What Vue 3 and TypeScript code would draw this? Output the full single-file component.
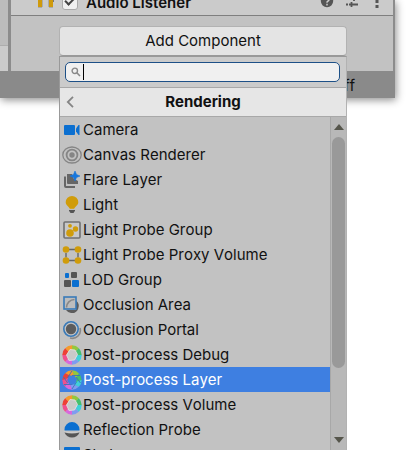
<script setup lang="ts">
import { ref } from 'vue'

interface Item {
  name: string
  icon: string
}

const items: Item[] = [
  { name: 'Camera', icon: 'camera' },
  { name: 'Canvas Renderer', icon: 'canvas' },
  { name: 'Flare Layer', icon: 'flare' },
  { name: 'Light', icon: 'light' },
  { name: 'Light Probe Group', icon: 'probes' },
  { name: 'Light Probe Proxy Volume', icon: 'proxy' },
  { name: 'LOD Group', icon: 'lod' },
  { name: 'Occlusion Area', icon: 'area' },
  { name: 'Occlusion Portal', icon: 'portal' },
  { name: 'Post-process Debug', icon: 'ring' },
  { name: 'Post-process Layer', icon: 'aperture' },
  { name: 'Post-process Volume', icon: 'ring' },
  { name: 'Reflection Probe', icon: 'reflection' },
  { name: 'Skybox', icon: 'skybox' },
]

const selected = ref('Post-process Layer')
const query = ref('')
const enabled = ref(true)

// Colour wheel segments, clockwise from the top
const wheel: string[] = ['#93c83e', '#45c06d', '#3fd0d8', '#7f9cf0', '#d868dc', '#f0508c', '#ee4036', '#f59a2c']

function point(radius: number, degrees: number): string {
  const a = ((degrees - 90) * Math.PI) / 180
  return `${(10 + radius * Math.cos(a)).toFixed(2)} ${(10 + radius * Math.sin(a)).toFixed(2)}`
}

function segment(index: number, inner: number, twist: number): string {
  const from = index * 45
  const to = from + 46
  return `M${point(9.7, from)}A9.7 9.7 0 0 1 ${point(9.7, to)}L${point(inner, to + twist)}L${point(inner, from + twist)}Z`
}
</script>

<template>
  <main class="screen">
    <section class="inspector">
      <div class="strip"><div class="strip-top"></div></div>
      <div class="pane">
        <header class="component">
          <svg class="headphones" viewBox="0 0 18 18" aria-hidden="true">
            <path d="M2 11V8a7 7 0 0 1 14 0v3" fill="none" stroke="#777" stroke-width="2" />
            <path d="M1 8h4v8H1zM12 8h4v8h-4z" fill="#cf9a0c" />
            <path d="M5 8h1v8H5zM11 8h1v8h-1zM1 16h4v1H1zM12 16h4v1h-4z" fill="#aaa" />
          </svg>
          <label class="toggle">
            <input v-model="enabled" type="checkbox" />
            <span>Audio Listener</span>
          </label>
          <span class="tools">
            <button type="button" aria-label="Help">
              <svg viewBox="0 0 14 14"><circle cx="7" cy="7" r="6.2" fill="#555" /><path d="M5 5.4a2 2 0 1 1 2.8 1.8Q7 7.6 7 8.7M7 9.7v1.7" fill="none" stroke="#ccc" stroke-width="1.5" /></svg>
            </button>
            <button type="button" aria-label="Presets">
              <svg viewBox="0 0 14 14"><path d="M1 4.500h12M9 2v5M1 10.500h2M4 10.500h9M6.500 8v5" fill="none" stroke="#555" stroke-width="1.800" /></svg>
            </button>
            <button type="button" aria-label="More">
              <svg viewBox="0 0 14 14"><path d="M5.500 1h3v3h-3zM5.500 6h3v3h-3zM5.500 11h3v3h-3z" fill="#555" /></svg>
            </button>
          </span>
        </header>
        <div class="add">
          <button class="add-button" type="button">Add Component</button>
          <div class="popup">
            <div class="search">
              <label class="field">
                <svg viewBox="0 0 10 10" aria-hidden="true"><circle cx="3.800" cy="3.800" r="2.700" fill="none" stroke="#888" stroke-width="1.400" /><path d="M5.800 5.800L9 9" stroke="#888" stroke-width="1.600" /></svg>
                <span class="caret"></span>
                <input v-model="query" type="text" aria-label="Search components" />
              </label>
            </div>
            <div class="title">
              <button type="button" aria-label="Back">
                <svg viewBox="0 0 8 12"><path d="M7 .8L1.800 6 7 11.200" fill="none" stroke="#858585" stroke-width="1.800" /></svg>
              </button>
              <h2>Rendering</h2>
            </div>
            <div class="body">
              <ul class="list">
                <li v-for="item in items" :key="item.name">
                  <button type="button" class="row" :class="{ selected: item.name === selected }" @click="selected = item.name">
                    <svg viewBox="0 0 20 20" aria-hidden="true">
                      <g v-if="item.icon === 'camera'" fill="#0b6fd0">
                        <rect x="2" y="5" width="11" height="10" rx="1" />
                        <path d="M14 8.500L16.500 5H17.500V15H16.500L14 11.500Z" />
                      </g>
                      <g v-else-if="item.icon === 'canvas'" fill="none" stroke="#858585">
                        <ellipse cx="10" cy="10" rx="9.200" ry="8" stroke-width="1.300" />
                        <circle cx="10" cy="10" r="5.400" stroke-width="1.800" />
                        <circle cx="10" cy="10" r="2.700" fill="#858585" stroke="none" />
                      </g>
                      <g v-else-if="item.icon === 'flare'">
                        <path d="M3 6.500v9.500a1 1 0 0 0 1 1h9" fill="none" stroke="#666" stroke-width="2" />
                        <path d="M5 4h5l1.500 4.500L16 11v3H6a1 1 0 0 1-1-1z" fill="#666" />
                        <path d="M13 1l1.500 3.500L18 6l-3.500 1.500L13 11l-1.500-3.500L8 6l3.500-1.500z" fill="#1676dc" stroke="#1676dc" stroke-width=".6" />
                      </g>
                      <g v-else-if="item.icon === 'light'">
                        <path d="M10 1a6.300 6.300 0 0 0-6.300 6.300c0 3.200 3.300 4.200 4.100 6.700h4.400c.8-2.500 4.100-3.500 4.100-6.700A6.300 6.300 0 0 0 10 1z" fill="#d09c0a" />
                        <path d="M7 14.500h6v1.300L11.500 18h-3L7 15.800z" fill="#555" />
                        <path d="M7 14.300h6" stroke="#ddd" stroke-width=".8" />
                      </g>
                      <g v-else-if="item.icon === 'probes'" fill="#d09c0a">
                        <rect x="2" y="2" width="16" height="16" rx="1" fill="#c8c8c8" stroke="#707070" stroke-width="1.600" />
                        <circle cx="8" cy="13" r="3.800" />
                        <circle cx="13.500" cy="9" r="2.700" />
                        <circle cx="8" cy="5.800" r="1.900" />
                      </g>
                      <g v-else-if="item.icon === 'proxy'" fill="#d09c0a">
                        <path d="M7 4.500h6M7 15.500h6M4 8v4.500M16 8v4.500" fill="none" stroke="#666" stroke-width="1.400" />
                        <circle cx="4" cy="4.500" r="3.300" />
                        <circle cx="16" cy="4.500" r="3.300" />
                        <circle cx="4" cy="15.500" r="3.300" />
                        <circle cx="16" cy="15.500" r="3.300" />
                      </g>
                      <g v-else-if="item.icon === 'lod'">
                        <rect x="3" y="3" width="4" height="5" rx="1" fill="#0b6fd0" />
                        <rect x="9" y="2" width="6" height="6" rx="1" fill="#555" />
                        <rect x="2" y="10" width="7" height="7" rx="1" fill="#555" />
                        <rect x="10" y="10" width="7" height="7" rx="1" fill="#0b6fd0" />
                      </g>
                      <g v-else-if="item.icon === 'area'">
                        <path d="M14 5.500a7 7 0 0 1-5 12.500 7 7 0 0 1-5-3h10z" fill="#5c5c5c" />
                        <rect x="2" y="2" width="12" height="12" fill="#bdbdbd" stroke="#397ab8" stroke-width="1.600" />
                        <path d="M4.500 12.500c0-4.500 3.500-8 8-8" fill="none" stroke="#888" stroke-width="1.600" />
                      </g>
                      <g v-else-if="item.icon === 'portal'">
                        <path d="M8 18a8 8 0 0 0 10-10" fill="none" stroke="#888" stroke-width="1.600" />
                        <circle cx="9" cy="9" r="7.200" fill="#c4c4c4" stroke="#397ab8" stroke-width="1.600" />
                        <circle cx="9" cy="9" r="5.200" fill="#5c5c5c" />
                      </g>
                      <g v-else-if="item.icon === 'ring'">
                        <path v-for="(color, i) in wheel" :key="color" :d="segment(i, 5, 0)" :fill="color" />
                        <path d="M8 4.500l5 .5 2.500 4.500L12.500 15l-5.500.5L4.500 10z" fill="#c9c9c9" stroke="#e4e4e4" stroke-width=".8" />
                      </g>
                      <g v-else-if="item.icon === 'aperture'">
                        <path v-for="(color, i) in wheel" :key="color" :d="segment(i, 4.5, 28)" :fill="color" />
                        <path d="M10 .8L5.500 8M18 5.500L10 5.500M18.500 13L14 7M10 19l4.500-7M2 14.500h8.500M1.500 7L6 13.500" stroke="#3d6fb8" stroke-width=".9" />
                        <path d="M7.500 5.700h5l2.300 4.300-2.300 4.300h-5L5.200 10z" fill="#3e7fe1" />
                      </g>
                      <g v-else-if="item.icon === 'reflection'">
                        <path d="M2.500 9.500a7.500 7.500 0 0 1 15 0v1h-15z" fill="#0b6fd0" />
                        <path d="M1.800 10.500c3 2 13.400 2 16.400 0v1c-3 2-13.400 2-16.400 0z" fill="#ccc" />
                        <path d="M2.500 12.500q7.500 1.800 15 0C16 16 13.500 17.600 10 17.600S4 16 2.500 12.500z" fill="#555" />
                      </g>
                      <rect v-else x="2" y="2" width="16" height="16" rx="1" fill="#0b6fd0" />
                    </svg>
                    <span>{{ item.name }}</span>
                  </button>
                </li>
              </ul>
              <div class="scrollbar" aria-hidden="true">
                <svg viewBox="0 0 10 6"><path d="M0 6L5 0l5 6z" fill="#55554b" /></svg>
                <div class="track"><div class="thumb"></div></div>
                <svg viewBox="0 0 10 6"><path d="M0 0h10L5 6z" fill="#55554b" /></svg>
              </div>
            </div>
          </div>
        </div>
      </div>
      <footer class="status">Off</footer>
    </section>
  </main>
</template>

<style>
body {
  background: #fff;
}
</style>

<style scoped>
.screen {
  height: 100vh;
  overflow: hidden;
  color: #111;
  font: 15px/24px Inter, sans-serif;
  font-kerning: none;
}
button {
  border: 0;
  padding: 0;
  background: none;
  color: inherit;
  font: inherit;
  font-kerning: inherit;
}
svg {
  display: block;
  flex: none;
}
.inspector {
  display: grid;
  grid-template-columns: 8px 1fr;
  grid-template-rows: 71px 27px;
  margin-right: 15px;
  background: #c2c2c2;
  box-shadow: 1px 2px 8px rgba(0, 0, 0, 0.45);
}
.strip {
  background: #cbcbcb;
}
.strip-top {
  height: 45px;
  background: #bcbcbc;
  border-bottom: 1px solid #adadad;
}
.pane {
  min-width: 0;
  border-left: 3px solid #8c8c8c;
  border-right: 2px solid #8c8c8c;
}
.component {
  display: flex;
  align-items: flex-end;
  height: 15px;
  overflow: hidden;
  padding: 0 9px 0 26px;
  background: #cbcbcb;
  border-bottom: 1px solid #7f7f7f;
}
.headphones {
  width: 18px;
  height: 18px;
  margin-bottom: 6px;
}
.toggle {
  display: flex;
  align-items: center;
  gap: 8px;
  margin-left: 7px;
  font-weight: 600;
}
.toggle input {
  appearance: none;
  width: 16px;
  height: 16px;
  margin: 0 0 3px;
  background: #f0f0f0;
  border: 1px solid #aaa;
  border-radius: 3px;
}
.toggle input:checked::after {
  content: '';
  display: block;
  width: 4px;
  height: 8px;
  margin: 0 auto;
  border: solid #444;
  border-width: 0 2px 2px 0;
  transform: rotate(45deg);
}
.tools {
  display: flex;
  gap: 11px;
  margin: 0 0 7px auto;
}
.tools svg {
  width: 14px;
  height: 14px;
}
.add {
  position: relative;
  margin: 10px 46px 0 48px;
}
.add-button {
  display: block;
  width: 100%;
  height: 30px;
  background: #e4e4e4;
  border: 1px solid #b2b2b2;
  border-bottom-color: #999;
  border-radius: 4px;
}
.popup {
  position: absolute;
  top: 30px;
  left: 0;
  right: 0;
  z-index: 1;
  display: flex;
  flex-direction: column;
  box-sizing: border-box;
  height: calc(100vh - 64px);
  background: #c2c2c2;
  border: 1px solid #999;
  border-right-color: #b2b2b2;
  border-bottom: 0;
}
.search {
  padding: 5px 6px 5px 5px;
  background: #cbcbcb;
  border-bottom: 1px solid #a8a8a8;
}
.field {
  display: flex;
  align-items: center;
  height: 18px;
  padding-left: 5px;
  background: #f0f0f0;
  border: 1px solid #1d5087;
  border-radius: 5px;
}
.field svg {
  width: 10px;
  height: 10px;
}
.caret {
  width: 1px;
  height: 16px;
  margin-left: 2px;
  background: #000;
}
.field input {
  flex: 1;
  min-width: 0;
  height: 16px;
  padding: 0;
  border: 0;
  outline: 0;
  background: none;
  font: inherit;
}
.title {
  display: grid;
  grid-template-columns: 20px 1fr 20px;
  align-items: center;
  height: 28px;
  background: #e6e6e6;
  border-bottom: 1px solid #a8a8a8;
}
.title svg {
  width: 8px;
  height: 12px;
  margin-left: 6px;
}
.title h2 {
  margin: 0;
  font-size: 15px;
  font-weight: 700;
  text-align: center;
}
.body {
  display: flex;
  flex: 1;
  min-height: 0;
}
.list {
  flex: 1;
  min-width: 0;
  margin: 0;
  padding: 0;
  overflow: hidden;
  list-style: none;
}
.row {
  display: flex;
  align-items: flex-start;
  gap: 1px;
  width: 100%;
  height: 25px;
  padding-left: 2px;
  text-align: left;
}
.row svg {
  width: 20px;
  height: 20px;
  margin-top: 3px;
}
.row span {
  line-height: 25px;
}
.row.selected {
  background: #3e7fe1;
  color: #fff;
}
.scrollbar {
  display: flex;
  flex-direction: column;
  align-items: center;
  gap: 7px;
  box-sizing: border-box;
  width: 16px;
  padding: 7px 0;
  background: #b8b8b8;
  border-left: 1px solid #a8a8a8;
}
.scrollbar svg {
  width: 10px;
  height: 6px;
}
.track {
  flex: 1;
  width: 13px;
}
.thumb {
  height: 79%;
  background: #999;
  border-radius: 7px;
}
.status {
  grid-column: 1 / -1;
  box-sizing: border-box;
  padding-right: 40px;
  background: #8a8a8a;
  line-height: 29px;
  text-align: right;
}
</style>
